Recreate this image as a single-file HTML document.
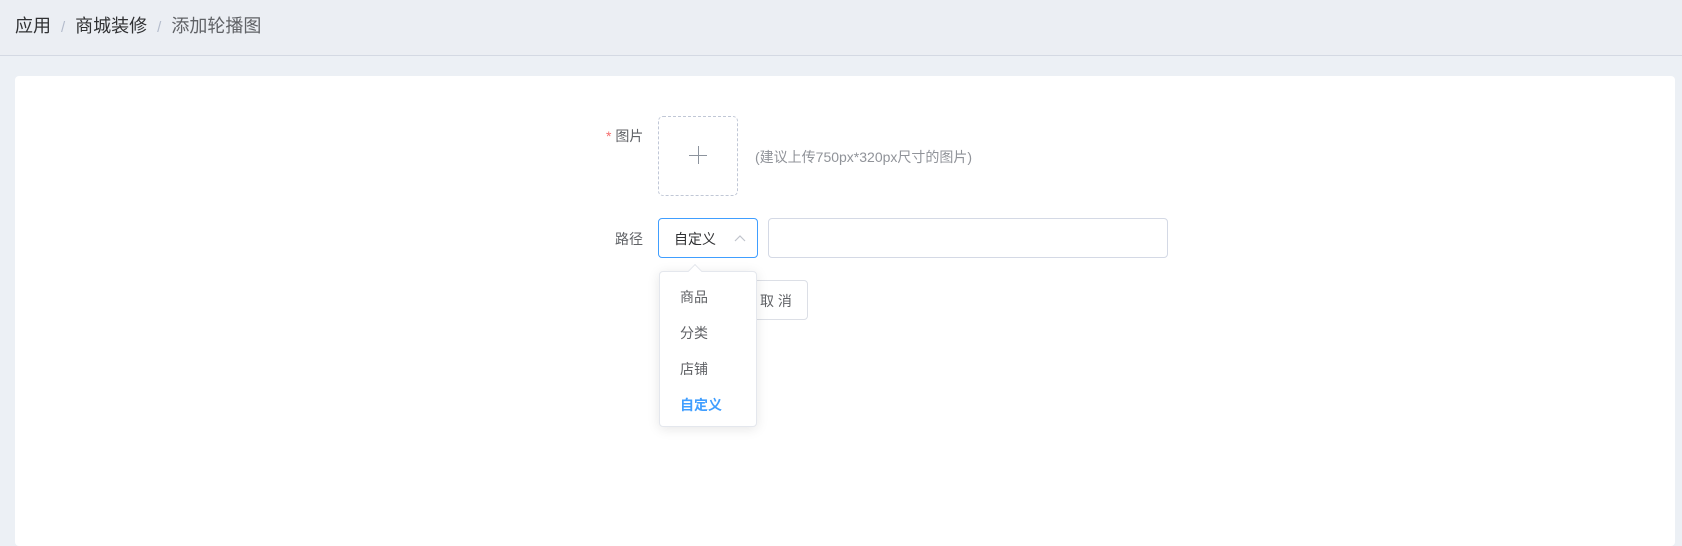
<!DOCTYPE html>
<html><head><meta charset="utf-8"><style>
*{margin:0;padding:0;box-sizing:border-box}
body{width:1682px;height:531px;background:#ecf0f5;font-family:"Liberation Sans","Noto Sans CJK SC",sans-serif;overflow:hidden;position:relative}
.hdr{height:56px;border-bottom:1px solid #d4d9e3;background:#ebeef3;padding:0 15px;font-size:18px;line-height:52px;color:#303133}
.hdr .s{color:#b4bccc;margin:0 10px;font-size:15px}
.hdr .l{color:#606266}
.card{position:absolute;left:15px;top:76px;width:1660px;height:470px;background:#fff;border-radius:4px}
.a{position:absolute}
.lbl{font-size:14px;color:#606266}
</style></head><body>
<div class="hdr">应用<span class="s">/</span>商城装修<span class="s">/</span><span class="l">添加轮播图</span></div>
<div class="card"></div>
<div class="a lbl" style="left:606px;top:126px"><span style="color:#f56c6c">*</span> 图片</div>
<div class="a" style="left:658px;top:116px;width:80px;height:80px;border:1px dashed #c0c7d6;border-radius:5px">
<div class="a" style="left:30px;top:38px;width:18px;height:1px;background:#8c939d"></div>
<div class="a" style="left:38.5px;top:29px;width:1px;height:18px;background:#8c939d"></div></div>
<div class="a" style="left:755px;top:147px;font-size:14px;color:#909399">(建议上传750px*320px尺寸的图片)</div>
<div class="a lbl" style="left:615px;top:229px">路径</div>
<div class="a" style="left:658px;top:218px;width:100px;height:40px;border:1px solid #409eff;border-radius:4px">
<span class="a" style="left:15px;top:10px;font-size:14px;color:#303133">自定义</span>
<svg class="a" style="left:75px;top:15px" width="12" height="8"><path d="M1 7 L6 2 L11 7" fill="none" stroke="#c0c4cc" stroke-width="1.2"/></svg></div>
<div class="a" style="left:768px;top:218px;width:400px;height:40px;border:1px solid #d4d9e5;border-radius:4px"></div>
<div class="a" style="left:700px;top:280px;width:108px;height:40px;border:1px solid #dcdfe6;border-radius:4px;background:#fff">
<span class="a" style="left:59px;top:10px;font-size:14px;color:#606266">取 消</span></div>
<div class="a" style="left:659px;top:271px;width:98px;height:156px;background:#fff;border:1px solid #e4e7ed;border-radius:4px;box-shadow:0 2px 12px rgba(0,0,0,.1);font-size:14px;color:#606266">
<div class="a" style="left:30px;top:-6px;width:10px;height:10px;background:#fff;border-left:1px solid #e4e7ed;border-top:1px solid #e4e7ed;transform:rotate(45deg)"></div>
<div class="a" style="left:20px;top:15px">商品</div>
<div class="a" style="left:20px;top:51px">分类</div>
<div class="a" style="left:20px;top:87px">店铺</div>
<div class="a" style="left:20px;top:123px;color:#409eff;font-weight:bold">自定义</div>
</div>
</body></html>
